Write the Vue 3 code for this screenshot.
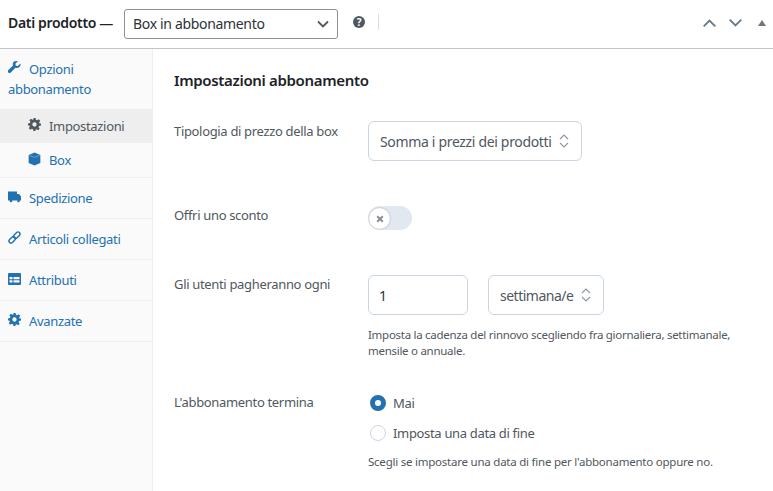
<script setup>
const tabs = [
  { label: 'Spedizione', icon: 'truck' },
  { label: 'Articoli collegati', icon: 'link' },
  { label: 'Attributi', icon: 'table' },
  { label: 'Avanzate', icon: 'gear' },
];
</script>

<template>
  <div class="panel">
    <header class="head">
      <strong class="head_title">Dati prodotto —</strong>
      <div class="type_select">
        <span>Box in abbonamento</span>
        <svg width="12" height="8" viewBox="0 0 12 8"><path d="M1 1.500l5 5 5-5" fill="none" stroke="#50575e" stroke-width="1.800" /></svg>
      </div>
      <span class="help">?</span>
      <span class="head_sep"></span>
      <div class="head_arrows">
        <svg width="13" height="8" viewBox="0 0 13 8"><path d="M.7 7.300l5.800-5.800 5.800 5.800" fill="none" stroke="#687b8a" stroke-width="1.900" /></svg>
        <svg width="13" height="8" viewBox="0 0 13 8"><path d="M.7 .7l5.800 5.800 5.800-5.800" fill="none" stroke="#687b8a" stroke-width="1.900" /></svg>
        <span class="caret"></span>
      </div>
    </header>

    <div class="body">
      <nav class="side">
        <div class="side_group">
          <a class="side_main">
            <svg class="ico" width="13" height="13" viewBox="0 0 14 14"><path d="M13.600 3.400c0 2.300-1.900 4.200-4.200 4.200-.5 0-1-.1-1.400-.2L3 12.400c-.8.800-2 .8-2.700.1s-.7-1.900.1-2.700l5-5c-.2-.5-.3-1-.3-1.500C5.100 1.300 7.100-.3 9.400.1c.4 0 .8.200 1.100.3L8 2.900l.4 2.200 2.200.4 2.500-2.500c.2.100.5 0 .5.400z" fill="#2271b1" /></svg>
            Opzioni abbonamento
          </a>
          <a class="side_sub active">
            <svg class="tab_ico" width="13" height="13" viewBox="0 0 24 24"><use href="#gear" fill="#50575e" /></svg>
            Impostazioni
          </a>
          <a class="side_sub">
            <svg class="tab_ico" width="13" height="14" viewBox="0 0 14 15"><path d="M7 .5l6.300 2.600v8.800L7 14.500.7 11.900V3.100z" fill="#2271b1" /><path d="M1.500 3.600L7 5.800l5.500-2.200" fill="none" stroke="#8db8d8" stroke-width=".7" /></svg>
            Box
          </a>
        </div>
        <a v-for="tab in tabs" :key="tab.label" class="side_item">
          <svg v-if="tab.icon === 'truck'" class="tab_ico" width="13" height="12" viewBox="0 0 13 12"><path d="M0 .5h9v2.500h2l2 2.500v4H0z" fill="#2271b1" /><circle cx="3" cy="10" r="1.300" fill="#2271b1" /><circle cx="10.500" cy="10" r="1.300" fill="#2271b1" /></svg>
          <svg v-else-if="tab.icon === 'link'" class="tab_ico" width="13" height="13" viewBox="0 0 13 13"><g fill="none" stroke="#2271b1" stroke-width="1.400"><rect x="-2" y="-3.700" width="4" height="7.400" rx="2" transform="translate(8.800 4.200) rotate(45)" /><rect x="-2" y="-3.700" width="4" height="7.400" rx="2" transform="translate(4.200 8.800) rotate(45)" /></g></svg>
          <svg v-else-if="tab.icon === 'table'" class="tab_ico" width="13" height="12" viewBox="0 0 13 12"><path fill-rule="evenodd" d="M1 0h11a1 1 0 0 1 1 1v10a1 1 0 0 1-1 1H1a1 1 0 0 1-1-1V1a1 1 0 0 1 1-1zm.5 4v2.200h3V4zm4 0v2.200h6V4zm-4 3.200v2.300h3V7.200zm4 0v2.300h6V7.200z" fill="#2271b1" /></svg>
          <svg v-else class="tab_ico" width="13" height="13" viewBox="0 0 24 24"><use href="#gear" fill="#2271b1" /></svg>
          {{ tab.label }}
        </a>
      </nav>

      <main class="content">
        <h2>Impostazioni abbonamento</h2>

        <div class="row row_price">
          <label>Tipologia di prezzo della box</label>
          <div class="select select_price">
            <span>Somma i prezzi dei prodotti</span>
            <svg width="10" height="14" viewBox="0 0 10 14"><path d="M1 5l4-4 4 4M1 9l4 4 4-4" fill="none" stroke="#8c98a8" stroke-width="1.100" /></svg>
          </div>
        </div>

        <div class="row row_discount">
          <label>Offri uno sconto</label>
          <div class="toggle">
            <span class="knob">
              <svg width="8" height="8" viewBox="0 0 8 8"><path d="M1.200 1.200l5.600 5.600M6.800 1.200L1.200 6.800" stroke="#8f8a98" stroke-width="2" /></svg>
            </span>
          </div>
        </div>

        <div class="row row_cadence">
          <label>Gli utenti pagheranno ogni</label>
          <div>
            <div class="cadence">
              <div class="number">1</div>
              <div class="select select_unit">
                <span>settimana/e</span>
                <svg width="10" height="14" viewBox="0 0 10 14"><path d="M1 5l4-4 4 4M1 9l4 4 4-4" fill="none" stroke="#8c98a8" stroke-width="1.100" /></svg>
              </div>
            </div>
            <p class="hint">Imposta la cadenza del rinnovo scegliendo fra giornaliera, settimanale, mensile o annuale.</p>
          </div>
        </div>

        <div class="row row_end">
          <label>L'abbonamento termina</label>
          <div class="end_options">
            <div class="radio_line"><span class="radio on"></span>Mai</div>
            <div class="radio_line"><span class="radio"></span>Imposta una data di fine</div>
            <p class="hint hint_end">Scegli se impostare una data di fine per l'abbonamento oppure no.</p>
          </div>
        </div>
      </main>
    </div>

    <svg class="defs" width="0" height="0">
      <symbol id="gear" viewBox="0 0 24 24">
        <path fill-rule="evenodd" d="M10 0h4l.7 3.400 2.100.9 2.900-1.900 2.800 2.800-1.900 2.900.9 2.100L24 10v4l-3.500.8-.9 2.100 1.900 2.900-2.800 2.800-2.900-1.900-2.100.9L14 24h-4l-.7-3.400-2.100-.9-2.900 1.900-2.800-2.800 1.900-2.900-.9-2.100L0 14v-4l3.500-.8.900-2.100-1.900-2.900 2.800-2.800 2.900 1.900 2.100-.9zM12 8a4 4 0 1 0 0 8 4 4 0 0 0 0-8z" />
      </symbol>
    </svg>
  </div>
</template>

<style scoped>
.panel {
  width: 773px;
  height: 491px;
  overflow: hidden;
  background: #fff;
  font-family: 'Noto Sans', 'Open Sans', sans-serif;
  font-size: 13px;
  letter-spacing: -0.33px;
  color: #50575e;
}
.defs {
  position: absolute;
}

.head {
  height: 48px;
  display: flex;
  align-items: center;
  padding-left: 8px;
  border-bottom: 1px solid #c3c4c7;
  box-sizing: content-box;
}
.head_title {
  font-size: 14px;
  font-weight: 600;
  color: #1d2327;
  margin-right: 11px;
  margin-top: -4px;
}
.type_select {
  width: 214px;
  height: 30px;
  box-sizing: border-box;
  display: flex;
  align-items: center;
  justify-content: space-between;
  padding: 0 8px;
  border: 1px solid #8c8f94;
  border-radius: 3px;
  font-size: 14px;
  color: #2c3338;
  margin-top: -1px;
}
.help {
  width: 12px;
  height: 12px;
  margin-left: 15px;
  margin-top: -4px;
  border-radius: 50%;
  background: #50575e;
  color: #fff;
  font-size: 10px;
  font-weight: 700;
  line-height: 12px;
  text-align: center;
}
.head_sep {
  width: 1px;
  height: 16px;
  margin-left: 13px;
  margin-top: -4px;
  background: #dcdcde;
}
.head_arrows {
  margin-left: auto;
  margin-right: 7px;
  margin-top: -2px;
  display: flex;
  align-items: center;
  gap: 13px;
}
.caret {
  width: 0;
  height: 0;
  border-left: 4px solid transparent;
  border-right: 4px solid transparent;
  border-bottom: 6px solid #72777c;
  margin-left: 3px;
}

.body {
  display: flex;
  height: 442px;
}
.side {
  width: 153px;
  flex-shrink: 0;
  box-sizing: border-box;
  background: #fafafa;
  border-right: 1px solid #eee;
  color: #2271b1;
  line-height: 20px;
}
.side_group {
  border-bottom: 1px solid #eee;
}
.side_main {
  display: block;
  padding: 10px 8px;
  height: 60px;
  box-sizing: border-box;
}
.side_main .ico {
  margin-right: 5px;
  vertical-align: 0;
}
.tab_ico {
  margin-top: -3px;
  flex-shrink: 0;
}
.side_sub {
  display: flex;
  align-items: center;
  gap: 8px;
  height: 34px;
  padding-left: 28px;
}
.side_sub.active {
  background: #eee;
  color: #50575e;
}
.side_item {
  display: flex;
  align-items: center;
  gap: 8px;
  height: 40px;
  padding-left: 8px;
  border-bottom: 1px solid #eee;
}

.content {
  flex: 1;
  padding: 21px 0 0 21px;
  min-width: 0;
}
h2 {
  margin: 0;
  font-size: 15px;
  line-height: 20px;
  font-weight: 600;
  color: #1d2327;
}
.row {
  display: flex;
}
.row label {
  width: 194px;
  flex-shrink: 0;
  line-height: 20px;
}
.row_price {
  margin-top: 31px;
  height: 84px;
}
.row_discount {
  height: 70px;
}
.row_cadence {
  height: 117px;
}
.row_cadence label {
  margin-top: -1px;
}
.select,
.number {
  height: 40px;
  box-sizing: border-box;
  display: flex;
  align-items: center;
  border: 1px solid #cbd5e1;
  border-radius: 6px;
  background: #fff;
  font-size: 14px;
}
.select span {
  white-space: nowrap;
}
.select {
  justify-content: space-between;
  padding: 0 12px 0 11px;
}
.select_price {
  width: 214px;
}
.select_unit {
  width: 116px;
  letter-spacing: -0.5px;
}
.number {
  width: 100px;
  padding: 0 10px;
  color: #2c3338;
}
.toggle {
  width: 44px;
  height: 24px;
  margin-top: 1px;
  border-radius: 12px;
  background: #e2e8f0;
}
.knob {
  width: 21px;
  height: 21px;
  margin: 2px 0 0 1px;
  display: flex;
  align-items: center;
  justify-content: center;
  border-radius: 50%;
  background: #fff;
  box-shadow: 0 0 2px rgba(0, 0, 0, 0.3);
}
.cadence {
  display: flex;
  gap: 20px;
}
.hint {
  margin: 12px 0 0;
  width: 380px;
  font-size: 11.5px;
  letter-spacing: -0.28px;
  line-height: 16px;
  color: #50575e;
}
.end_options {
  margin-top: -4px;
}
.hint_end {
  margin-top: 6px;
  width: 400px;
  letter-spacing: -0.23px;
}
.radio_line {
  display: flex;
  align-items: center;
  gap: 7px;
  height: 30px;
  font-size: 13px;
}
.radio {
  width: 16px;
  height: 16px;
  margin-left: 2px;
  box-sizing: border-box;
  border-radius: 50%;
  border: 1px solid #cbd5e1;
  background: #fff;
}
.radio.on {
  border: 5px solid #2271b1;
}
</style>
